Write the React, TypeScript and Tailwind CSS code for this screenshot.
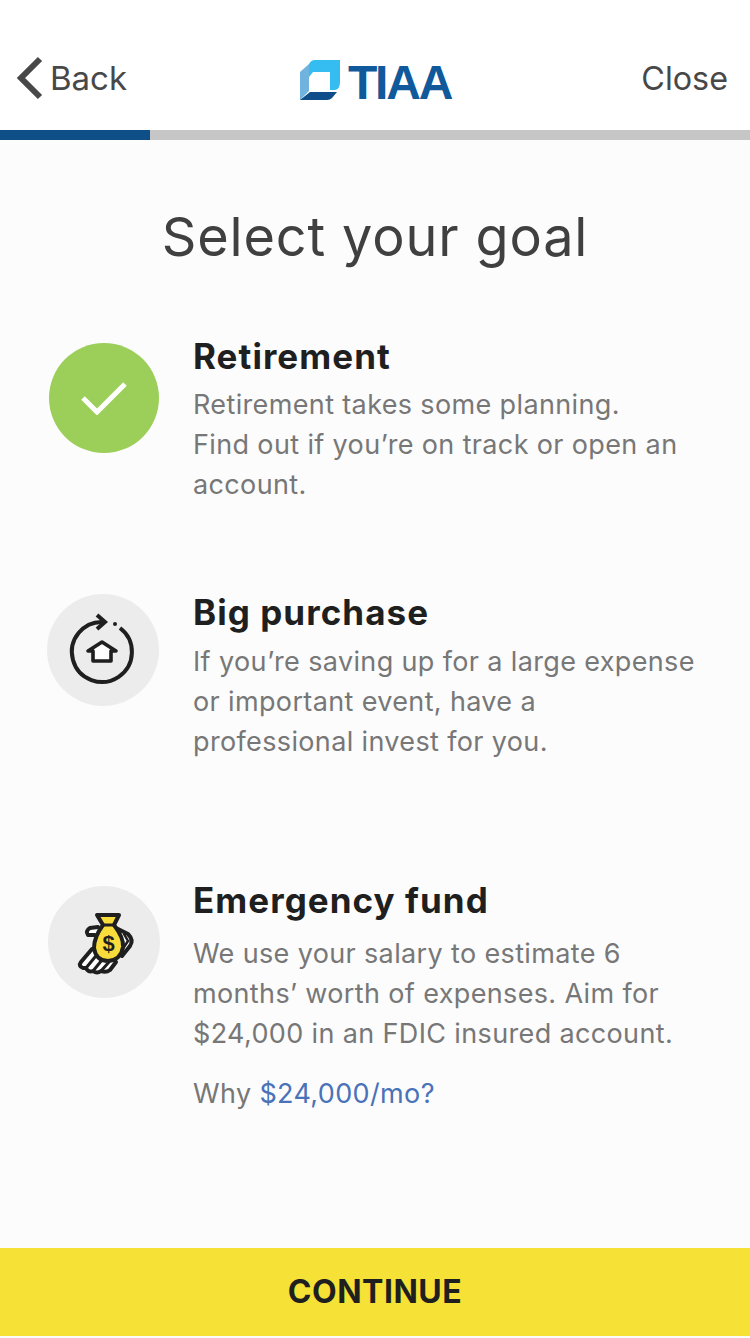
import { ReactNode } from "react";

const sans = "font-['Inter','Noto_Sans',sans-serif]";

function BackChevron() {
  return (
    <svg width="28" height="44" viewBox="0 0 28 44" className="text-[#484848]">
      <path d="M24 3 L5 22 L24 41" fill="none" stroke="currentColor" strokeWidth="6" />
    </svg>
  );
}

function LogoMark() {
  return (
    <svg width="42" height="42" viewBox="0 0 42 42">
      <path d="M1 40 L1 12 L10 4 L10 31 Z" fill="#6fb3de" />
      <path d="M10 4 Q12 0 16 0 L41 0 L41 22 Q41 29 36 30 L31 30 L31 12 L14 12 L10 17 Z" fill="#35bdf2" />
      <path d="M1 40 L11 32 L38 32 L33 38 Q31 40 28 40 Z" fill="#0f4c8a" />
    </svg>
  );
}

function HomeCycleIcon() {
  return (
    <svg width="80" height="80" viewBox="0 0 80 80">
      <g fill="none" stroke="#1f1f1f" strokeWidth="4">
        <path d="M41 12 A30 30 0 1 0 57 18" />
        <path d="M34 5 L42 12 L34 19" />
      </g>
      <circle cx="52" cy="14" r="2" fill="#1f1f1f" />
      <path d="M39 32 L53 41 H48 V51 H30 V41 H25 Z" fill="#ffffff" stroke="#1f1f1f" strokeWidth="3.6" strokeLinejoin="round" />
    </svg>
  );
}

function MoneyIcon() {
  return (
    <svg width="80" height="80" viewBox="0 0 80 80">
      <g stroke="#1f1f1f" strokeLinecap="round" strokeLinejoin="round">
        <path d="M34 25 L26 26 Q21 29 24 33 L31 33" fill="#ffffff" strokeWidth="4" />
        <path d="M52 26 L64 32 Q70 38 66 44 L58 54" fill="#ffffff" strokeWidth="4" />
        <path d="M60 32 L64 39 L58 48" fill="none" strokeWidth="2.5" />
        <path d="M28 47 L17 60 Q14 64 19 66 L22 66 Q24 71 29 69 Q33 72 37 69 Q42 71 46 68 L52 60 L34 48 Z" fill="#ffffff" strokeWidth="4" />
        <path d="M22 66 L31 55 M29 69 L38 58 M37 69 L45 60" fill="none" strokeWidth="3" />
        <path d="M33 13 L55 13 L50 23 Q60 36 59 45 Q57 58 44 59 Q32 59 30 46 Q30 35 39 23 Z" fill="#f8dc3c" strokeWidth="4" />
        <path d="M39 23 L50 23" fill="none" strokeWidth="3.2" />
      </g>
      <text x="44.5" y="49" textAnchor="middle" fontSize="22" fontWeight="700" fill="#1f1f1f" fontFamily="Liberation Sans, sans-serif">$</text>
    </svg>
  );
}

function Goal({ icon, children, className }: { icon: ReactNode; children: ReactNode; className: string }) {
  return (
    <div className={`flex items-start ${className}`}>
      {icon}
      <div className="flex flex-col">{children}</div>
    </div>
  );
}

const goalTitle = "text-[35px] leading-[34px] font-bold tracking-[1.05px] text-[#1f1f1f]";
const goalText = "text-[27px] leading-[40px] tracking-[0.36px] text-[#777777]";

export default function App() {
  return (
    <div className={`w-[750px] h-[1338px] flex flex-col bg-[#fcfcfc] ${sans}`}>
      <header className="h-[130px] shrink-0 bg-white relative flex items-end justify-between pl-[16px] pr-[22px] pb-[30px] text-[#484848] text-[33px] leading-[44px]">
        <div className="flex items-center gap-[6px]">
          <BackChevron />
          <span>Back</span>
        </div>
        <div className="absolute left-[299px] top-[60px] flex items-start gap-[7px]">
          <LogoMark />
          <span className="mt-[2px] font-['Liberation_Sans',sans-serif] font-bold text-[48px] leading-[42px] h-[42px] tracking-[-2.2px] text-[#10599b]">TIAA</span>
        </div>
        <span className="-mb-[1px] text-[32.3px]">Close</span>
      </header>

      <div className="h-[10px] shrink-0 bg-[#c6c6c6]">
        <div className="h-full w-[150px] bg-[#0e4f87]" />
      </div>

      <main className="flex-1 flex flex-col">
        <h1 className="mt-[64px] text-center text-[54px] leading-[66px] font-normal tracking-[0.85px] text-[#404040]">Select your goal</h1>

        <Goal
          className="mt-[70px] pl-[49px]"
          icon={
            <div className="w-[110px] h-[110px] mt-[3px] mr-[34px] shrink-0 rounded-full bg-[#9bcf59] flex items-center justify-center">
              <svg width="46" height="34" viewBox="0 0 46 34">
                <path d="M2 17 L16 31 L44 3" fill="none" stroke="#ffffff" strokeWidth="5" />
              </svg>
            </div>
          }
        >
          <h2 className={`-mt-[1px] ${goalTitle}`}>Retirement</h2>
          <p className={`mt-[12px] ${goalText}`}>
            Retirement takes some planning.
            <br />
            Find out if you’re on track or open an
            <br />
            account.
          </p>
        </Goal>

        <Goal
          className="mt-[89px] pl-[47px]"
          icon={
            <div className="w-[112px] h-[112px] mr-[34px] shrink-0 rounded-full bg-[#ececec] flex items-center justify-center">
              <HomeCycleIcon />
            </div>
          }
        >
          <h2 className={`mt-[1px] ${goalTitle}`}>Big purchase</h2>
          <p className={`mt-[13px] ${goalText}`}>
            If you’re saving up for a large expense
            <br />
            or important event, have a
            <br />
            professional invest for you.
          </p>
        </Goal>

        <Goal
          className="mt-[124px] pl-[48px]"
          icon={
            <div className="w-[112px] h-[112px] mr-[33px] shrink-0 rounded-full bg-[#ececec] flex items-center justify-center">
              <MoneyIcon />
            </div>
          }
        >
          <h2 className={`-mt-[3px] ${goalTitle}`}>Emergency fund</h2>
          <p className={`mt-[17px] ${goalText}`}>
            We use your salary to estimate 6
            <br />
            months’ worth of expenses. Aim for
            <br />
            $24,000 in an FDIC insured account.
          </p>
          <p className={`mt-[20px] ${goalText}`}>
            Why <span className="text-[#4a72b8]">$24,000/mo?</span>
          </p>
        </Goal>
      </main>

      <button className="h-[88px] mb-[2px] shrink-0 bg-[#f6e136] text-[#1f1f1f] text-[32px] font-bold tracking-[0.5px]">CONTINUE</button>
    </div>
  );
}
